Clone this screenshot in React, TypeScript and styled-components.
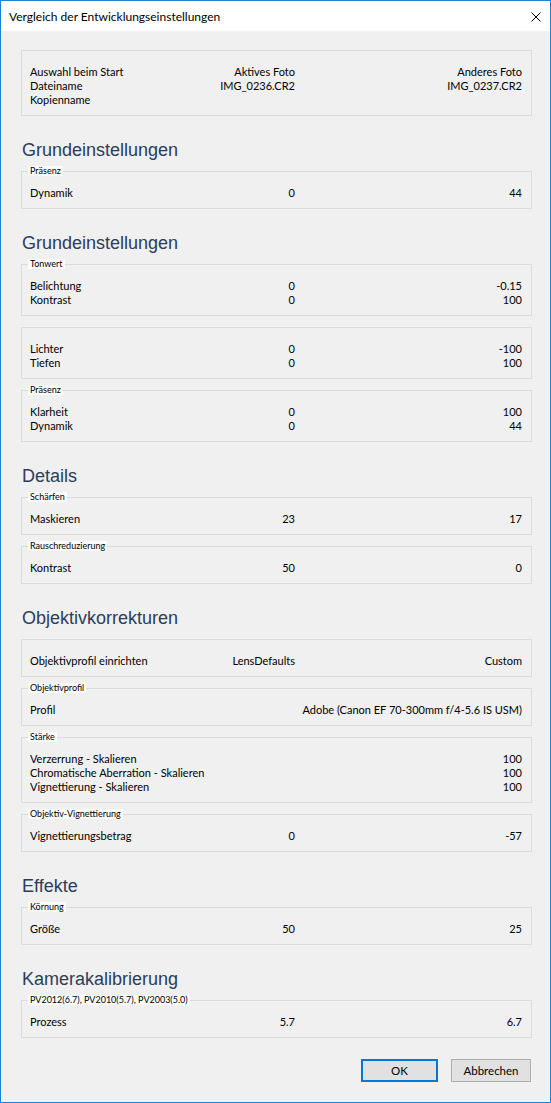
import * as React from 'react';
import styled, { createGlobalStyle } from 'styled-components';

const GlobalStyle = createGlobalStyle`
	html, body {
		margin: 0;
		padding: 0;
		background: #f0f0f0;
	}
	* {
		box-sizing: border-box;
	}
`;

const Window = styled.div`
	width: 551px;
	height: 1103px;
	border: 1px solid #1883d7;
	background: #f0f0f0;
	font-family: Lato, "Liberation Sans", sans-serif;
	font-size: 11px;
	color: #000;
	display: flex;
	flex-direction: column;
	overflow: hidden;
`;

const TitleBar = styled.div`
	height: 30px;
	background: #fff;
	display: flex;
	align-items: center;
	justify-content: space-between;
	padding: 0 9px 0 8px;
`;

const Title = styled.span`
	font-size: 12px;
	line-height: 14px;
	padding-top: 1px;
`;

const CloseButton = styled.span`
	display: flex;
	width: 10px;
	height: 10px;
	margin-top: 1px;
`;

const Content = styled.div`
	flex: 1;
	padding: 19px 18px 0 20px;
	display: flex;
	flex-direction: column;
`;

const SectionTitle = styled.h2`
	margin: 22px 0 9px;
	font-family: "Liberation Sans", Arial, sans-serif;
	font-weight: normal;
	font-size: 18px;
	line-height: 24px;
	color: #2b3d5b;
	padding-left: 1px;
`;

const GroupBox = styled.div`
	position: relative;
	border: 1px solid #dcdcdc;
	padding: 14px 9px 8px 8px;

	& + & {
		margin-top: 11px;
	}
`;

const Legend = styled.span`
	position: absolute;
	top: -6px;
	left: 6px;
	padding: 0 2px;
	background: #fbfbfb;
	font-size: 9px;
	line-height: 10px;
	white-space: nowrap;
`;

const Row = styled.div`
	display: grid;
	grid-template-columns: minmax(0, 1fr) 100px 227px;
	line-height: 14px;
	white-space: nowrap;
`;

const Label = styled.span`
	overflow: visible;
`;

const Value = styled.span<{ $wide?: boolean }>`
	text-align: right;
	grid-column: ${props => (props.$wide ? '2 / span 2' : 'auto')};
`;

const ButtonBar = styled.div`
	display: flex;
	justify-content: flex-end;
	gap: 13px;
	margin-top: 21px;
	padding-right: 1px;
`;

const Button = styled.button<{ $primary?: boolean }>`
	height: 23px;
	min-width: ${props => (props.$primary ? '77px' : '80px')};
	border: ${props => (props.$primary ? '2px solid #0078d7' : '1px solid #adadad')};
	background: #e1e1e1;
	font-family: Lato, "Liberation Sans", sans-serif;
	font-size: 11.5px;
	color: #000;
	padding: 0 6px;
`;

type RowData = [string, string, string, boolean?];

interface Group {
	legend?: string;
	rows: RowData[];
}

interface Section {
	title?: string;
	groups: Group[];
}

const sections: Section[] = [
	{
		groups: [
			{
				rows: [
					['Auswahl beim Start', 'Aktives Foto', 'Anderes Foto'],
					['Dateiname', 'IMG_0236.CR2', 'IMG_0237.CR2'],
					['Kopienname', '', ''],
				],
			},
		],
	},
	{
		title: 'Grundeinstellungen',
		groups: [{ legend: 'Präsenz', rows: [['Dynamik', '0', '44']] }],
	},
	{
		title: 'Grundeinstellungen',
		groups: [
			{ legend: 'Tonwert', rows: [['Belichtung', '0', '-0.15'], ['Kontrast', '0', '100']] },
			{ rows: [['Lichter', '0', '-100'], ['Tiefen', '0', '100']] },
			{ legend: 'Präsenz', rows: [['Klarheit', '0', '100'], ['Dynamik', '0', '44']] },
		],
	},
	{
		title: 'Details',
		groups: [
			{ legend: 'Schärfen', rows: [['Maskieren', '23', '17']] },
			{ legend: 'Rauschreduzierung', rows: [['Kontrast', '50', '0']] },
		],
	},
	{
		title: 'Objektivkorrekturen',
		groups: [
			{ rows: [['Objektivprofil einrichten', 'LensDefaults', 'Custom']] },
			{ legend: 'Objektivprofil', rows: [['Profil', '', 'Adobe (Canon EF 70-300mm f/4-5.6 IS USM)', true]] },
			{
				legend: 'Stärke',
				rows: [
					['Verzerrung - Skalieren', '', '100'],
					['Chromatische Aberration - Skalieren', '', '100'],
					['Vignettierung - Skalieren', '', '100'],
				],
			},
			{ legend: 'Objektiv-Vignettierung', rows: [['Vignettierungsbetrag', '0', '-57']] },
		],
	},
	{
		title: 'Effekte',
		groups: [{ legend: 'Körnung', rows: [['Größe', '50', '25']] }],
	},
	{
		title: 'Kamerakalibrierung',
		groups: [{ legend: 'PV2012(6.7), PV2010(5.7), PV2003(5.0)', rows: [['Prozess', '5.7', '6.7']] }],
	},
];

const CloseIcon = () => (
	<svg width="10" height="10" viewBox="0 0 10 10">
		<path d="M0.5 0.5 L9.5 9.5 M9.5 0.5 L0.5 9.5" stroke="#000" strokeWidth="1" fill="none" />
	</svg>
);

export default function App() {
	return (
		<Window>
			<GlobalStyle />
			<TitleBar>
				<Title>Vergleich der Entwicklungseinstellungen</Title>
				<CloseButton><CloseIcon /></CloseButton>
			</TitleBar>
			<Content>
				{sections.map((section, si) => (
					<React.Fragment key={si}>
						{section.title && <SectionTitle>{section.title}</SectionTitle>}
						<div>
							{section.groups.map((group, gi) => (
								<GroupBox key={gi}>
									{group.legend && <Legend>{group.legend}</Legend>}
									{group.rows.map((row, ri) => (
										<Row key={ri}>
											<Label>{row[0]}</Label>
											{!row[3] && <Value>{row[1]}</Value>}
											<Value $wide={row[3]}>{row[2]}</Value>
										</Row>
									))}
								</GroupBox>
							))}
						</div>
					</React.Fragment>
				))}
				<ButtonBar>
					<Button $primary>OK</Button>
					<Button>Abbrechen</Button>
				</ButtonBar>
			</Content>
		</Window>
	);
}
